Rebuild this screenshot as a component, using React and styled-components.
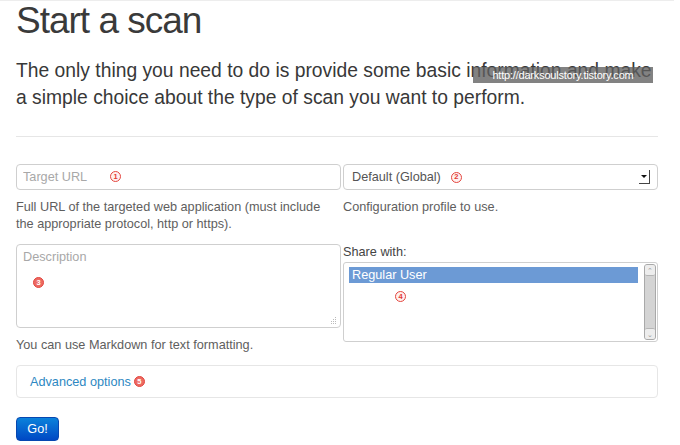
import React from "react";
import styled, { createGlobalStyle } from "styled-components";

const GlobalStyle = createGlobalStyle`
    body {
        margin: 0;
        background: #fff;
        font-family: "Liberation Sans", Arial, sans-serif;
        color: #333;
    }
`;

const Page = styled.div`
    width: 642px;
    padding: 0 16px;
    border-top: 1px solid #ededed;
`;

const Title = styled.h1`
    margin: 0;
    font-size: 37px;
    font-weight: normal;
    letter-spacing: -1px;
    line-height: 40px;
    color: #3a3a3a;
`;

const Intro = styled.p`
    position: relative;
    margin: 16px 0 0;
    font-size: 19.3px;
    line-height: 27px;
    color: #383838;
`;

const Watermark = styled.span`
    position: absolute;
    left: 457px;
    top: 10px;
    width: 180px;
    height: 16px;
    background: rgba(95, 95, 95, 0.78);
    color: #fff;
    font-size: 11px;
    line-height: 16px;
    text-align: center;
    letter-spacing: -0.2px;
`;

const Rule = styled.hr`
    margin: 25px 0 0;
    border: 0;
    border-top: 1px solid #e6e6e6;
`;

const Columns = styled.div`
    display: grid;
    grid-template-columns: 325px 315px;
    column-gap: 2px;
    margin-top: 27px;
    align-items: start;
`;

const Column = styled.div`
    display: flex;
    flex-direction: column;
`;

const FieldWrap = styled.div`
    position: relative;
`;

const TextInput = styled.input`
    box-sizing: border-box;
    width: 100%;
    height: 26px;
    margin: 0;
    padding: 0 6px;
    border: 1px solid #cfcfcf;
    border-radius: 4px;
    font-family: inherit;
    font-size: 12.7px;
    color: #555;
    outline: none;
    &::placeholder {
        color: #a8a8a8;
    }
`;

const TextArea = styled.div`
    position: relative;
    box-sizing: border-box;
    height: 84px;
    margin-top: 11px;
    padding: 5px 6px;
    border: 1px solid #cfcfcf;
    border-radius: 4px;
    font-size: 12.7px;
    color: #a8a8a8;
`;

const Grip = styled.svg`
    position: absolute;
    right: 3px;
    bottom: 3px;
`;

const Help = styled.p`
    margin: 9px 0 0;
    min-height: ${(p) => (p.$lines || 1) * 17}px;
    padding-right: ${(p) => p.$pad || 0}px;
    font-size: 12.7px;
    line-height: 17px;
    color: #5e5e5e;
`;

const Select = styled.div`
    box-sizing: border-box;
    display: flex;
    align-items: center;
    height: 26px;
    padding: 0 6px 0 8px;
    border: 1px solid #cfcfcf;
    border-radius: 4px;
    font-size: 12.7px;
    color: #555;
`;

const SelectValue = styled.span`
    flex: 1;
    display: flex;
    align-items: center;
`;

const Arrow = styled.span`
    box-sizing: border-box;
    width: 11px;
    height: 14px;
    margin-right: 1px;
    border-right: 1px solid #444;
    border-bottom: 1px solid #444;
    display: flex;
    align-items: center;
    justify-content: center;
    &::after {
        content: "";
        border-left: 3px solid transparent;
        border-right: 3px solid transparent;
        border-top: 3px solid #111;
    }
`;

const Label = styled.label`
    margin-top: 11px;
    font-size: 12.7px;
    line-height: 17px;
    color: #444;
`;

const ListBox = styled.div`
    position: relative;
    box-sizing: border-box;
    display: flex;
    height: 80px;
    margin-top: 1px;
    padding: 3px 1px 1px 5px;
    border: 1px solid #cfcfcf;
    border-radius: 3px;
`;

const Options = styled.div`
    flex: 1;
`;

const Option = styled.div`
    height: 16px;
    margin-top: 1px;
    padding-left: 3px;
    font-size: 12.7px;
    line-height: 16px;
    color: ${(p) => (p.$selected ? "#fff" : "#333")};
    background: ${(p) => (p.$selected ? "#6c9ad5" : "transparent")};
`;

const Scrollbar = styled.div`
    box-sizing: border-box;
    display: flex;
    flex-direction: column;
    justify-content: space-between;
    width: 12px;
    margin: -2px 0 0 6px;
    border: 1px solid #a9a9a9;
    border-radius: 3px;
    background: #d4d4d4;
`;

const ScrollButton = styled.span`
    box-sizing: border-box;
    height: 11px;
    background: #ededed;
    border-radius: 2px;
    font-size: 7px;
    line-height: 11px;
    text-align: center;
    color: #999;
    border-${(p) => (p.$up ? "bottom" : "top")}: 1px solid #b5b5b5;
`;

const Advanced = styled.div`
    box-sizing: border-box;
    height: 33px;
    margin-top: 11px;
    padding-left: 13px;
    display: flex;
    align-items: center;
    border: 1px solid #e6e6e6;
    border-radius: 4px;
`;

const Link = styled.a`
    font-size: 12.7px;
    color: #2d88c2;
    text-decoration: none;
`;

const GoButton = styled.button`
    box-sizing: border-box;
    width: 43px;
    height: 24px;
    margin-top: 19px;
    padding: 0;
    border: 1px solid #0747b0;
    border-radius: 4px;
    background: linear-gradient(#0b82db, #0048c4);
    color: #fff;
    font-family: inherit;
    font-size: 12.7px;
`;

const Mark = styled.span`
    box-sizing: border-box;
    display: inline-flex;
    align-items: center;
    justify-content: center;
    width: 11px;
    height: 11px;
    border-radius: 50%;
    border: 1.3px solid #e4463f;
    background: ${(p) => (p.$filled ? "#ec6a62" : "#fff0ef")};
    color: ${(p) => (p.$filled ? "#fff" : "#e23a33")};
    font-size: 7.5px;
    line-height: 1;
    font-weight: bold;
    ${(p) =>
        p.$x !== undefined &&
        `position: absolute; left: ${p.$x}px; top: ${p.$y}px;`}
`;

const InlineMark = styled(Mark)`
    margin-left: ${(p) => p.$gap || 4}px;
`;

export default function App() {
    return (
        <>
            <GlobalStyle />
            <Page>
                <Title>Start a scan</Title>
                <Intro>
                    The only thing you need to do is provide some basic
                    information and make a simple choice about the type of
                    scan you want to perform.
                    <Watermark>http://darksoulstory.tistory.com</Watermark>
                </Intro>
                <Rule />
                <Columns>
                    <Column>
                        <FieldWrap>
                            <TextInput placeholder="Target URL" />
                            <Mark $x={94} $y={7}>1</Mark>
                        </FieldWrap>
                        <Help $lines={2} $pad={8}>
                            Full URL of the targeted web application (must
                            include the appropriate protocol, http or https).
                        </Help>
                        <TextArea>
                            Description
                            <Mark $x={16} $y={32} $filled>
                                3
                            </Mark>
                            <Grip width="7" height="7" viewBox="0 0 7 7">
                                <g fill="#bbb">
                                    <rect x="5" y="0" width="1" height="1" />
                                    <rect x="3" y="2" width="1" height="1" />
                                    <rect x="5" y="2" width="1" height="1" />
                                    <rect x="1" y="4" width="1" height="1" />
                                    <rect x="3" y="4" width="1" height="1" />
                                    <rect x="5" y="4" width="1" height="1" />
                                    <rect x="1" y="6" width="1" height="1" />
                                    <rect x="3" y="6" width="1" height="1" />
                                    <rect x="5" y="6" width="1" height="1" />
                                </g>
                            </Grip>
                        </TextArea>
                        <Help>You can use Markdown for text formatting.</Help>
                    </Column>
                    <Column>
                        <Select>
                            <SelectValue>
                                Default (Global)
                                <InlineMark $gap={10}>2</InlineMark>
                            </SelectValue>
                            <Arrow />
                        </Select>
                        <Help $lines={2}>Configuration profile to use.</Help>
                        <Label>Share with:</Label>
                        <ListBox>
                            <Options>
                                <Option $selected>Regular User</Option>
                            </Options>
                            <Scrollbar>
                                <ScrollButton $up>&#8963;</ScrollButton>
                                <ScrollButton>&#8964;</ScrollButton>
                            </Scrollbar>
                            <Mark $x={51} $y={28}>4</Mark>
                        </ListBox>
                    </Column>
                </Columns>
                <Advanced>
                    <Link href="#">Advanced options</Link>
                    <InlineMark $gap={3} $filled>
                        5
                    </InlineMark>
                </Advanced>
                <GoButton>Go!</GoButton>
            </Page>
        </>
    );
}
